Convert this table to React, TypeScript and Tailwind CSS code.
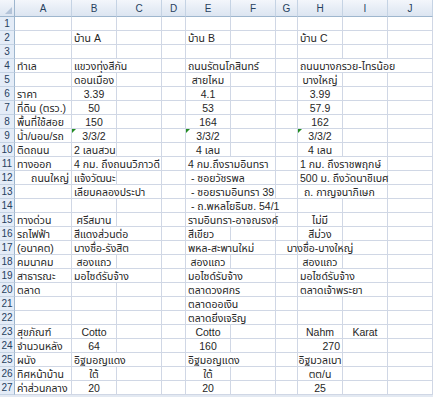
import type { ReactNode } from 'react';

type Cell = {
  c: number; // 0 = A ... 9 = J
  t: string;
  a?: 'l' | 'c' | 'r';
  s?: number;
  tri?: boolean;
  pad?: boolean;
};

const letters = ['A', 'B', 'C', 'D', 'E', 'F', 'G', 'H', 'I', 'J'];

const spanClass: Record<number, string> = {
  1: 'col-span-1',
  2: 'col-span-2',
  3: 'col-span-3',
};

const alignClass = {
  l: 'justify-start',
  c: 'justify-center',
  r: 'justify-end',
};

// rows 1..27
const rows: Cell[][] = [
  [],
  [
    { c: 1, t: 'บ้าน A' },
    { c: 4, t: 'บ้าน B' },
    { c: 7, t: 'บ้าน C' },
  ],
  [],
  [
    { c: 0, t: 'ทำเล' },
    { c: 1, t: 'แขวงทุ่งสีกัน', s: 2 },
    { c: 4, t: 'ถนนรัตนโกสินทร์', s: 2 },
    { c: 7, t: 'ถนนบางกรวย-ไทรน้อย', s: 3 },
  ],
  [
    { c: 1, t: 'ดอนเมือง', a: 'c' },
    { c: 4, t: 'สายไหม', a: 'c' },
    { c: 7, t: 'บางใหญ่', a: 'c' },
  ],
  [
    { c: 0, t: 'ราคา' },
    { c: 1, t: '3.39', a: 'c' },
    { c: 4, t: '4.1', a: 'c' },
    { c: 7, t: '3.99', a: 'c' },
  ],
  [
    { c: 0, t: 'ที่ดิน (ตรว.)' },
    { c: 1, t: '50', a: 'c' },
    { c: 4, t: '53', a: 'c' },
    { c: 7, t: '57.9', a: 'c' },
  ],
  [
    { c: 0, t: 'พื้นที่ใช้สอย' },
    { c: 1, t: '150', a: 'c' },
    { c: 4, t: '164', a: 'c' },
    { c: 7, t: '162', a: 'c' },
  ],
  [
    { c: 0, t: 'น้ำ/นอน/รถ' },
    { c: 1, t: '3/3/2', a: 'c', tri: true },
    { c: 4, t: '3/3/2', a: 'c', tri: true },
    { c: 7, t: '3/3/2', a: 'c', tri: true },
  ],
  [
    { c: 0, t: 'ติดถนน' },
    { c: 1, t: '2 เลนสวน' },
    { c: 4, t: '4 เลน', a: 'c' },
    { c: 7, t: '4 เลน', a: 'c' },
  ],
  [
    { c: 0, t: 'ทางออก' },
    { c: 1, t: '4 กม. ถึงถนนวิภาวดี', s: 2 },
    { c: 4, t: '4 กม.ถึงรามอินทรา', s: 2 },
    { c: 7, t: '1 กม. ถึงราชพฤกษ์', s: 2 },
  ],
  [
    { c: 0, t: 'ถนนใหญ่', a: 'r' },
    { c: 1, t: 'แจ้งวัฒนะ' },
    { c: 4, t: ' - ซอยวัชรพล', s: 2 },
    { c: 7, t: '500 ม. ถึงวัดนาชิเบศ', s: 2 },
  ],
  [
    { c: 1, t: 'เลียบคลองประปา', s: 2 },
    { c: 4, t: ' - ซอยรามอินทรา 39', s: 2 },
    { c: 7, t: 'ถ. กาญจนาภิเษก', s: 2, pad: true },
  ],
  [{ c: 4, t: ' - ถ.พหลโยธินซ. 54/1', s: 3 }],
  [
    { c: 0, t: 'ทางด่วน' },
    { c: 1, t: 'ศรีสมาน', a: 'c' },
    { c: 4, t: 'รามอินทรา-อาจณรงค์', s: 2 },
    { c: 7, t: 'ไม่มี', a: 'c' },
  ],
  [
    { c: 0, t: 'รถไฟฟ้า' },
    { c: 1, t: 'สีแดงส่วนต่อ', s: 2 },
    { c: 4, t: 'สีเขียว' },
    { c: 7, t: 'สีม่วง', a: 'c' },
  ],
  [
    { c: 0, t: '(อนาคต)' },
    { c: 1, t: 'บางซื่อ-รังสิต', s: 2 },
    { c: 4, t: 'พหล-สะพานใหม่', s: 2 },
    { c: 7, t: 'บางซื่อ-บางใหญ่', a: 'c' },
  ],
  [
    { c: 0, t: 'คมนาคม' },
    { c: 1, t: 'สองแถว', a: 'c' },
    { c: 4, t: 'สองแถว', a: 'c' },
    { c: 7, t: 'สองแถว', a: 'c' },
  ],
  [
    { c: 0, t: 'สาธารณะ' },
    { c: 1, t: 'มอไซด์รับจ้าง', s: 2 },
    { c: 4, t: 'มอไซด์รับจ้าง', s: 2 },
    { c: 7, t: 'มอไซด์รับจ้าง', s: 2 },
  ],
  [
    { c: 0, t: 'ตลาด' },
    { c: 4, t: 'ตลาดวงศกร', s: 2 },
    { c: 7, t: 'ตลาดเจ้าพระยา', s: 2 },
  ],
  [{ c: 4, t: 'ตลาดออเงิน', s: 2 }],
  [{ c: 4, t: 'ตลาดยิ่งเจริญ', s: 2 }],
  [
    { c: 0, t: 'สุขภัณฑ์' },
    { c: 1, t: 'Cotto', a: 'c' },
    { c: 4, t: 'Cotto', a: 'c' },
    { c: 7, t: 'Nahm', a: 'c' },
    { c: 8, t: 'Karat', a: 'c' },
  ],
  [
    { c: 0, t: 'จำนวนหลัง' },
    { c: 1, t: '64', a: 'c' },
    { c: 4, t: '160', a: 'c' },
    { c: 7, t: '270', a: 'r' },
  ],
  [
    { c: 0, t: 'ผนัง' },
    { c: 1, t: 'อิฐมอญแดง', s: 2 },
    { c: 4, t: 'อิฐมอญแดง', s: 2 },
    { c: 7, t: 'อิฐมวลเบา', a: 'c' },
  ],
  [
    { c: 0, t: 'ทิศหน้าบ้าน' },
    { c: 1, t: 'ใต้', a: 'c' },
    { c: 4, t: 'ใต้', a: 'c' },
    { c: 7, t: 'ตต/น', a: 'c' },
  ],
  [
    { c: 0, t: 'ค่าส่วนกลาง' },
    { c: 1, t: '20', a: 'c' },
    { c: 4, t: '20', a: 'c' },
    { c: 7, t: '25', a: 'c' },
  ],
];

function SheetCell({ cell }: { cell?: Cell }) {
  const span = cell?.s ?? 1;
  return (
    <div
      className={`relative flex h-[14px] items-center whitespace-nowrap border-r border-b border-[#d0d7e5] px-[2px] leading-[14px] ${spanClass[span]} ${
        alignClass[cell?.a ?? 'l']
      } ${cell?.pad ? 'pl-[6px]' : ''}`}
    >
      {cell?.tri && (
        <span className="absolute left-0 top-0 h-0 w-0 border-t-[4px] border-r-[4px] border-t-[#228b22] border-r-transparent" />
      )}
      {cell ? <span className="whitespace-pre">{cell.t}</span> : null}
    </div>
  );
}

function renderRow(cells: Cell[]) {
  const out: ReactNode[] = [];
  let col = 0;
  while (col < 10) {
    const cell = cells.find((x) => x.c === col);
    if (cell) {
      out.push(<SheetCell key={col} cell={cell} />);
      col += cell.s ?? 1;
    } else {
      out.push(<SheetCell key={col} />);
      col += 1;
    }
  }
  return out;
}

export default function App() {
  return (
    <div
      className="w-[433px] h-[397px] overflow-hidden bg-white text-[10.5px] text-[#262626]"
      style={{ fontFamily: "'Liberation Sans', Tahoma, 'Noto Sans Thai', 'Noto Sans', sans-serif" }}
    >
      <div className="grid grid-cols-[15px_57px_45px_45px_24px_45px_45px_22px_45px_45px_45px]">
        {/* column header */}
        <div className="relative h-[17px] border-r border-b border-[#9eb6ce] bg-linear-to-b from-[#f3f6fb] to-[#dce5f1]">
          <svg className="absolute right-[2px] bottom-[2px]" width="7" height="7" viewBox="0 0 7 7">
            <polygon points="7,0 7,7 0,7" fill="#b4c4d9" />
          </svg>
        </div>
        {letters.map((l) => (
          <div
            key={l}
            className="flex h-[17px] items-center justify-center border-r border-b border-r-[#c5d3e4] border-b-[#9eb6ce] bg-linear-to-b from-[#f3f6fb] to-[#dce5f1] text-[10px] text-[#27415f]"
          >
            {l}
          </div>
        ))}

        {rows.map((cells, i) => (
          <Row key={i} n={i + 1} cells={cells} />
        ))}
      </div>
      <div className="h-[2px] bg-[#e3e9f2]" />
    </div>
  );
}

function Row({ n, cells }: { n: number; cells: Cell[] }) {
  return (
    <>
      <div className="flex h-[14px] items-center justify-center border-r border-b border-r-[#9eb6ce] border-b-[#c5d3e4] bg-[#e4ecf7] text-[10px] text-[#27415f]">
        {n}
      </div>
      {renderRow(cells)}
    </>
  );
}
